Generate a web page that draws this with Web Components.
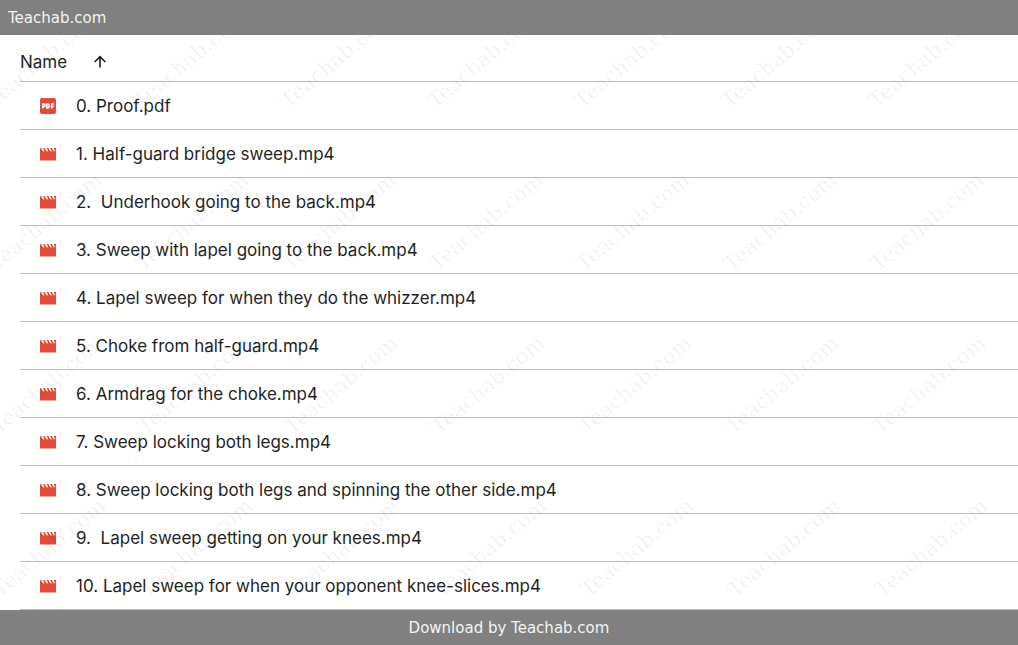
<!DOCTYPE html>
<html lang="en">
<head>
<meta charset="utf-8">
<meta name="viewport" content="width=device-width, initial-scale=1">
<title>Teachab.com</title>
<style>
    body {
        margin: 0;
        background: #fff;
        color: #1f1f1f;
        font-family: Inter, "Liberation Sans", sans-serif;
    }
</style>
</head>
<body>
<course-page>
    <site-bar slot="top">Teachab.com</site-bar>
    <file-list></file-list>
    <site-bar slot="bottom" centered>Download by Teachab.com</site-bar>
</course-page>

<script>
/**
 * Grey bar at the top and bottom of the page
 */
class SiteBar extends HTMLElement {
    constructor() {
        super();
        this.attachShadow({ mode: 'open' });
    }

    connectedCallback() {
        this.shadowRoot.innerHTML = `
            <style>
                :host {
                    display: block;
                    padding: 2px 8px 0;
                    background: #808080;
                    color: #f4f4f4;
                    font-family: "DejaVu Sans", Verdana, sans-serif;
                    font-size: 15px;
                    line-height: 33px;
                }
                :host([centered]) {
                    text-align: center;
                }
            </style>
            <slot></slot>
        `;
    }
}

/**
 * Icon for a file type: "pdf" or "mp4"
 */
class FileIcon extends HTMLElement {
    constructor() {
        super();
        this.attachShadow({ mode: 'open' });
    }

    connectedCallback() {
        const shapes = {
            pdf: `
                <rect width="16" height="16" rx="2" fill="#e34a3a"/>
                <path fill="none" stroke="#fff" stroke-width="1.5" d="M2.7 10.6V6.1h1.2a1.2 1.2 0 0 1 0 2.6H2.7M6.9 6.1v3.8h.9c1 0 1.4-.6 1.4-1.9s-.4-1.9-1.4-1.9zM11.6 10.6V6.1h2.6M11.6 8.4h2.2"/>
            `,
            mp4: `
                <path fill="#e34a3a" d="M0 3.4C0 2.6.4 2 1.2 2L2.9 5.2h1.7L3 2h1.8l1.7 3.2h1.7L6.600 2h1.800l1.700 3.200h1.700L10.200 2H12l1.700 3.200h1.300L13.700 2H16v11.400a1.200 1.200 0 0 1-1.200 1.200H1.200A1.200 1.200 0 0 1 0 13.400z"/>
            `
        };
        this.shadowRoot.innerHTML = `
            <style>
                :host {
                    display: block;
                    width: 16px;
                    height: 16px;
                }
                svg {
                    display: block;
                }
            </style>
            <svg width="16" height="16" viewBox="0 0 16 16" aria-hidden="true">
                ${shapes[this.getAttribute('type')]}
            </svg>
        `;
    }
}

/**
 * Table of files with a sortable name column
 */
class FileList extends HTMLElement {
    constructor() {
        super();
        this.attachShadow({ mode: 'open' });
        this._descending = false;
        this._items = [
            '0. Proof.pdf',
            '1. Half-guard bridge sweep.mp4',
            '2.  Underhook going to the back.mp4',
            '3. Sweep with lapel going to the back.mp4',
            '4. Lapel sweep for when they do the whizzer.mp4',
            '5. Choke from half-guard.mp4',
            '6. Armdrag for the choke.mp4',
            '7. Sweep locking both legs.mp4',
            '8. Sweep locking both legs and spinning the other side.mp4',
            '9.  Lapel sweep getting on your knees.mp4',
            '10. Lapel sweep for when your opponent knee-slices.mp4'
        ];
    }

    connectedCallback() {
        this.render();
    }

    toggleSort() {
        this._descending = !this._descending;
        this._items.reverse();
        this.render();
    }

    render() {
        this.shadowRoot.innerHTML = `
            <style>
                :host {
                    display: block;
                    padding-left: 20px;
                }
                table {
                    width: 100%;
                    border-collapse: separate;
                    border-spacing: 0;
                    font-size: 17px;
                }
                th, td {
                    padding: 0;
                    border-bottom: 1px solid #c0c0c0;
                    text-align: left;
                    font-weight: 400;
                }
                th {
                    height: 46px;
                }
                td {
                    height: 47px;
                }
                button {
                    display: flex;
                    align-items: center;
                    gap: 24px;
                    padding: 8px 0 0;
                    border: 0;
                    background: none;
                    color: inherit;
                    font: inherit;
                    cursor: pointer;
                }
                button.descending svg {
                    transform: rotate(180deg);
                }
                .file {
                    display: flex;
                    align-items: center;
                    gap: 20px;
                    padding-left: 20px;
                }
                .name {
                    white-space: pre;
                }
            </style>
            <table>
                <thead>
                    <tr>
                        <th aria-sort="${this._descending ? 'descending' : 'ascending'}">
                            <button class="${this._descending ? 'descending' : ''}">
                                Name
                                <svg width="18" height="18" viewBox="0 0 18 18" fill="none" stroke="currentColor" stroke-width="1.6" aria-hidden="true">
                                    <path d="M9 14.5V3.8M3.6 9L9 3.6 14.4 9"/>
                                </svg>
                            </button>
                        </th>
                    </tr>
                </thead>
                <tbody>
                    ${this._items.map(item => `
                        <tr>
                            <td>
                                <div class="file">
                                    <file-icon type="${item.split('.').pop()}"></file-icon>
                                    <span class="name">${item}</span>
                                </div>
                            </td>
                        </tr>
                    `).join('')}
                </tbody>
            </table>
        `;

        this.shadowRoot.querySelector('button').addEventListener('click', () => this.toggleSort());
    }
}

/**
 * Faint diagonal site name, repeated over the content
 */
class WaterMark extends HTMLElement {
    constructor() {
        super();
        this.attachShadow({ mode: 'open' });
    }

    connectedCallback() {
        const text = this.getAttribute('text');
        const columns = Math.ceil(window.innerWidth / 147);
        let marks = '';
        for (let row = 0; row < 4; row++) {
            for (let col = 0; col < columns; col++) {
                const x = -6 + col * 147 + row * 2;
                const y = 74 + row * 163;
                marks += `<text transform="translate(${x} ${y}) rotate(-40)">${text}</text>`;
            }
        }
        this.shadowRoot.innerHTML = `
            <style>
                :host {
                    display: block;
                    overflow: hidden;
                    pointer-events: none;
                }
                svg {
                    display: block;
                    width: 100%;
                    height: 100%;
                }
                text {
                    fill: #000;
                    fill-opacity: 0.06;
                    font-family: "DejaVu Serif", serif;
                    font-size: 21px;
                }
            </style>
            <svg aria-hidden="true">${marks}</svg>
        `;
    }
}

/**
 * Page frame: bar, content with watermark, bar
 */
class CoursePage extends HTMLElement {
    constructor() {
        super();
        this.attachShadow({ mode: 'open' });
    }

    connectedCallback() {
        this.shadowRoot.innerHTML = `
            <style>
                :host {
                    display: flex;
                    flex-direction: column;
                    min-height: 100vh;
                }
                main {
                    position: relative;
                    flex: 1;
                }
                water-mark {
                    position: absolute;
                    inset: 0;
                }
            </style>
            <slot name="top"></slot>
            <main>
                <slot></slot>
                <water-mark text="Teachab.com"></water-mark>
            </main>
            <slot name="bottom"></slot>
        `;
    }
}

customElements.define('site-bar', SiteBar);
customElements.define('file-icon', FileIcon);
customElements.define('file-list', FileList);
customElements.define('water-mark', WaterMark);
customElements.define('course-page', CoursePage);
</script>
</body>
</html>
